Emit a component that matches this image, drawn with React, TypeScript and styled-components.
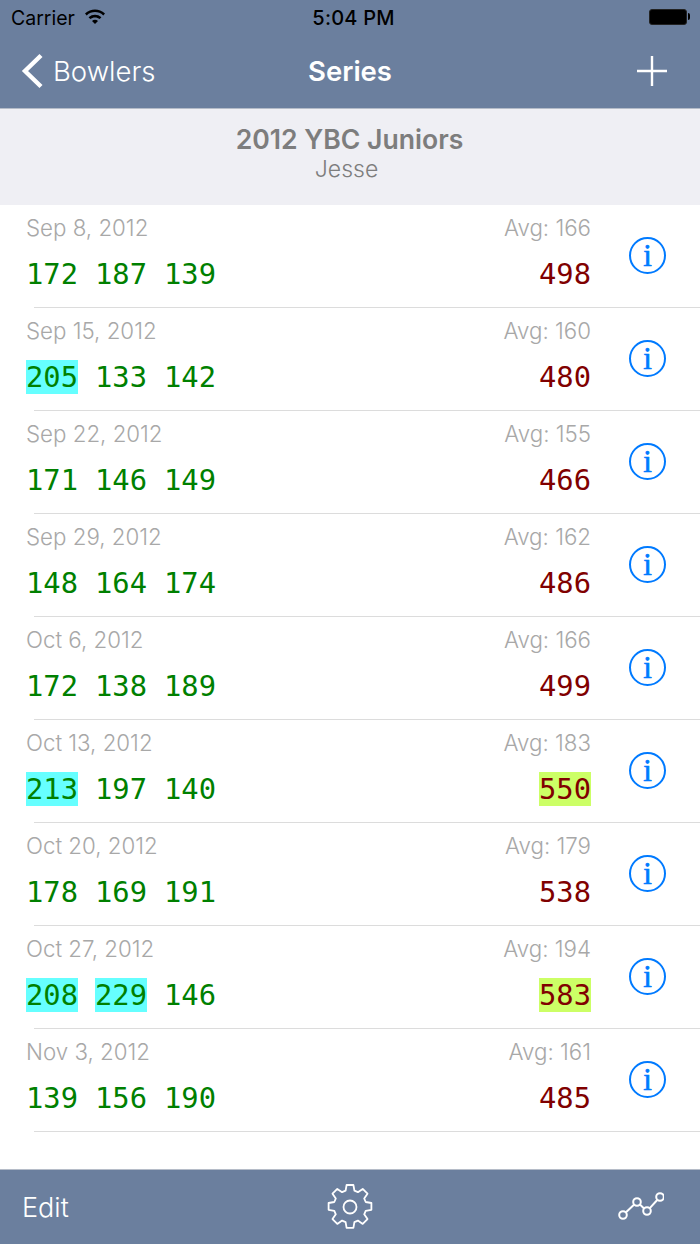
import * as React from "react";
import styled, { createGlobalStyle } from "styled-components";

type Series = {
  date: string;
  avg: number;
  games: number[];
  total: number;
};

const SERIES: Series[] = [
  { date: "Sep 8, 2012", avg: 166, games: [172, 187, 139], total: 498 },
  { date: "Sep 15, 2012", avg: 160, games: [205, 133, 142], total: 480 },
  { date: "Sep 22, 2012", avg: 155, games: [171, 146, 149], total: 466 },
  { date: "Sep 29, 2012", avg: 162, games: [148, 164, 174], total: 486 },
  { date: "Oct 6, 2012", avg: 166, games: [172, 138, 189], total: 499 },
  { date: "Oct 13, 2012", avg: 183, games: [213, 197, 140], total: 550 },
  { date: "Oct 20, 2012", avg: 179, games: [178, 169, 191], total: 538 },
  { date: "Oct 27, 2012", avg: 194, games: [208, 229, 146], total: 583 },
  { date: "Nov 3, 2012", avg: 161, games: [139, 156, 190], total: 485 },
];

const GlobalStyle = createGlobalStyle`
  html, body {
    margin: 0;
    padding: 0;
    background: #fff;
  }
`;

const App: React.FC = () => {
  return (
    <Screen>
      <GlobalStyle />
      <TopBar>
        <StatusBar>
          <Carrier>
            Carrier
            <svg width="22" height="16" viewBox="0 0 22 16">
              <path d="M1 5.5C6.8.2 15.2.2 21 5.5l-1.7 1.900C14.400 3 7.600 3 2.700 7.400z" fill="#000" />
              <path d="M4.600 9.200c3.700-3.300 9.100-3.300 12.800 0l-1.700 1.900c-2.700-2.300-6.700-2.300-9.400 0z" fill="#000" />
              <path d="M8 12.900c1.800-1.400 4.200-1.400 6 0L11 16z" fill="#000" />
            </svg>
          </Carrier>
          <Clock>5:04 PM</Clock>
          <Battery />
        </StatusBar>
        <NavBar>
          <BackLink>
            <svg width="24" height="36" viewBox="0 0 24 36" fill="none">
              <path d="M21 2.500 5 18l16 15.500" stroke="#fff" strokeWidth="4.400" />
            </svg>
            Bowlers
          </BackLink>
          <NavTitle>Series</NavTitle>
          <svg width="30" height="30" viewBox="0 0 30 30" fill="none">
            <path d="M15 0v30M0 15h30" stroke="#fff" strokeWidth="2.400" />
          </svg>
        </NavBar>
      </TopBar>
      <Header>
        <League>2012 YBC Juniors</League>
        <Bowler>Jesse</Bowler>
      </Header>
      <List>
        {SERIES.map((s) => (
          <Row key={s.date}>
            <RowBody>
              <MetaLine>
                <span>{s.date}</span>
                <span>Avg: {s.avg}</span>
              </MetaLine>
              <ScoreLine>
                <Games>
                  {s.games.map((g, i) => (
                    <Game key={i} $high={g >= 200}>
                      {g}
                    </Game>
                  ))}
                </Games>
                <Total $high={s.total >= 550}>{s.total}</Total>
              </ScoreLine>
            </RowBody>
            <InfoButton>i</InfoButton>
          </Row>
        ))}
      </List>
      <ToolBar>
        <ToolText>Edit</ToolText>
        <svg width="48" height="48" viewBox="0 0 48 48" fill="none" stroke="#fff" strokeWidth="1.800" strokeLinejoin="round">
          <path d="M20.600 2h6.800l1 5.700 3.500 1.500 4.800-3.300 4.800 4.800-3.300 4.800 1.500 3.500 5.700 1v6.800l-5.700 1-1.500 3.500 3.300 4.800-4.800 4.800-4.800-3.300-3.500 1.500-1 5.700h-6.800l-1-5.700-3.500-1.500-4.800 3.300-4.800-4.800 3.300-4.800-1.500-3.500-5.700-1v-6.800l5.700-1 1.500-3.500-3.300-4.800 4.800-4.800 4.800 3.300 3.500-1.500z" />
          <circle cx="24" cy="24" r="6.500" />
        </svg>
        <ChartIcon width="48" height="32" viewBox="0 0 48 32" fill="none" stroke="#fff" strokeWidth="2">
          <circle cx="7" cy="24" r="3.800" />
          <circle cx="21" cy="11" r="3.800" />
          <circle cx="31" cy="20" r="3.800" />
          <circle cx="44" cy="6" r="3.800" />
          <path d="M10 21.200 18.200 13.600M23.900 13.500l4.200 3.900M33.800 17.200l7.400-8.200" />
        </ChartIcon>
      </ToolBar>
    </Screen>
  );
};

export default App;

/* Styles */
const SF = `Inter, "Liberation Sans", sans-serif`;
const MONO = `"DejaVu Sans Mono", "Liberation Mono", monospace`;
const BAR = "#6b7f9e";

const Screen = styled.div`
  width: 700px;
  height: 1244px;
  display: flex;
  flex-direction: column;
  overflow: hidden;
  font-family: ${SF};
  background: #fff;
`;
const TopBar = styled.header`
  background: ${BAR};
  height: 108px;
  border-bottom: 1px solid #b5bcc8;
`;
const StatusBar = styled.div`
  height: 36px;
  padding: 0 12px 0 11px;
  display: grid;
  grid-template-columns: 1fr auto 1fr;
  align-items: center;
  color: #000;
  font-size: 19.5px;
`;
const Carrier = styled.div`
  display: flex;
  align-items: center;
  gap: 9px;
  svg {
    margin-bottom: 4px;
  }
`;
const Clock = styled.div`
  font-size: 20px;
  font-weight: 500;
  letter-spacing: 0.2px;
  margin-left: 8px;
`;
const Battery = styled.div`
  justify-self: end;
  position: relative;
  box-sizing: border-box;
  width: 38px;
  height: 16px;
  margin: 0 1px 2px 0;
  background: #000;
  border-radius: 3px;
  border: 1px solid #222;
  &::after {
    content: "";
    position: absolute;
    right: -4px;
    top: 3px;
    width: 2px;
    height: 7px;
    background: #000;
    border-radius: 0 2px 2px 0;
  }
`;
const NavBar = styled.nav`
  height: 72px;
  padding: 0 33px 2px 20px;
  box-sizing: border-box;
  display: flex;
  align-items: center;
  justify-content: space-between;
  position: relative;
  color: #fff;
  font-size: 27.5px;
`;
const BackLink = styled.div`
  display: flex;
  align-items: center;
  gap: 9px;
  font-weight: 300;
`;
const NavTitle = styled.div`
  position: absolute;
  left: 0;
  right: 0;
  text-align: center;
  font-weight: 600;
`;
const Header = styled.div`
  height: 96px;
  background: #efeff4;
  display: flex;
  flex-direction: column;
  align-items: center;
  padding-top: 14px;
  box-sizing: border-box;
`;
const League = styled.div`
  font-size: 26.6px;
  line-height: 32px;
  font-weight: 600;
  color: #7d7d7d;
  margin-right: 1px;
`;
const Bowler = styled.div`
  font-size: 23px;
  line-height: 28px;
  color: #7d7d7d;
  font-weight: 300;
  margin-right: 7px;
`;
const List = styled.main`
  flex: 1;
`;
const Row = styled.div`
  height: 103px;
  box-sizing: border-box;
  position: relative;
  display: flex;
  align-items: center;
  padding: 0 34px 0 26px;
  &::after {
    content: "";
    position: absolute;
    left: 34px;
    right: 0;
    bottom: 0;
    height: 1px;
    background: #dcdcdc;
  }
`;
const RowBody = styled.div`
  flex: 1;
  margin-right: 38px;
  align-self: flex-start;
  padding-top: 9px;
`;
const MetaLine = styled.div`
  display: flex;
  justify-content: space-between;
  font-size: 22.3px;
  line-height: 27px;
  color: #a8a8a8;
  font-weight: 300;
`;
const ScoreLine = styled.div`
  margin-top: 16px;
  display: flex;
  justify-content: space-between;
  font-family: ${MONO};
  font-size: 28.8px;
  line-height: 34px;
`;
const Games = styled.div`
  display: flex;
  gap: 17px;
`;
const Game = styled.span<{ $high: boolean }>`
  color: #008000;
  background: ${(p) => (p.$high ? "#66ffff" : "transparent")};
`;
const Total = styled.span<{ $high: boolean }>`
  color: #800000;
  background: ${(p) => (p.$high ? "#ccff66" : "transparent")};
`;
const InfoButton = styled.div`
  width: 33px;
  height: 33px;
  border: 2px solid #007aff;
  border-radius: 50%;
  display: flex;
  align-items: center;
  justify-content: center;
  color: #007aff;
  font-family: "Liberation Serif", serif;
  font-size: 31px;
  -webkit-text-stroke: 0.6px #007aff;
  line-height: 1;
  margin-bottom: 3px;
`;
const ToolBar = styled.footer`
  height: 75px;
  background: ${BAR};
  border-top: 1px solid #b5bcc8;
  box-sizing: border-box;
  padding: 0 22px;
  display: grid;
  grid-template-columns: 1fr auto 1fr;
  align-items: center;
`;
const ToolText = styled.div`
  color: #fff;
  font-size: 27px;
  font-weight: 300;
`;
const ChartIcon = styled.svg`
  justify-self: end;
  margin-right: 14px;
`;
